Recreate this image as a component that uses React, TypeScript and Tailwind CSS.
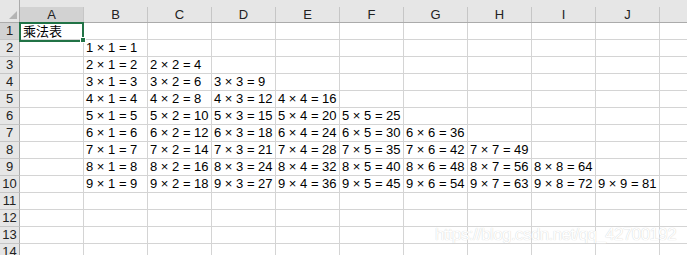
const cols = ["A", "B", "C", "D", "E", "F", "G", "H", "I", "J", "K"];
const rows = Array.from({ length: 14 }, (_, i) => i + 1);

function cellText(row: number, col: number) {
  if (row === 1 && col === 0) return "乘法表";
  const n = row - 1;
  if (row >= 2 && row <= 10 && col >= 1 && col <= n) {
    return `${n} × ${col} = ${n * col}`;
  }
  return "";
}

export default function App() {
  return (
    <div
      className="relative w-[687px] h-[255px] overflow-hidden bg-white text-[13px] text-black"
      style={{ fontFamily: '"Liberation Sans", Arial, "Noto Sans CJK SC", sans-serif' }}
    >
      {/* column headers */}
      <div className="flex h-[23px] bg-[#e6e6e6] border-b border-[#ababab]">
        <div className="relative w-[20px] shrink-0 border-r border-[#ababab]">
          <svg className="absolute left-[9px] top-[11px]" width="8" height="8" viewBox="0 0 8 8">
            <polygon points="8,0 8,8 0,8" fill="#b4b4b4" />
          </svg>
        </div>
        {cols.map((c, i) => (
          <div key={c} className="w-[64px] shrink-0 flex flex-col">
            <div className="h-[7px]" />
            <div
              className={
                "h-[15px] flex items-center justify-center border-r border-[#c6c6c6] leading-[15px] text-[#222] " +
                (i === 0 ? "bg-[#d2d2d2]" : "")
              }
            >
              {c === "K" ? "" : c}
            </div>
          </div>
        ))}
      </div>

      {/* rows */}
      {rows.map((r) => (
        <div key={r} className="flex h-[17px]">
          <div
            className={
              "w-[20px] shrink-0 flex items-center justify-center border-r border-b border-r-[#ababab] border-b-[#c6c6c6] leading-[16px] text-[#222] " +
              (r === 1 ? "bg-[#d2d2d2]" : "bg-[#e6e6e6]")
            }
          >
            {r}
          </div>
          {cols.map((c, i) => {
            const t = cellText(r, i);
            const last = i === r - 1;
            return (
              <div
                key={c}
                className={
                  "w-[64px] shrink-0 border-r border-b border-[#d4d4d4] pl-[2px] leading-[16px] whitespace-nowrap " +
                  (last || i === 0 ? "" : "overflow-hidden")
                }
              >
                {r === 1 && i === 0 ? (
                  <span className="pl-px" style={{ fontFamily: '"Noto Sans CJK SC", sans-serif' }}>
                    {t}
                  </span>
                ) : (
                  t
                )}
              </div>
            );
          })}
        </div>
      ))}

      {/* selected cell A1 */}
      <div className="absolute left-[19px] top-[22px] w-[65px] h-[20px] border-2 border-[#217346]" />
      <div className="absolute left-[80px] top-[37px] w-[6px] h-[6px] bg-[#217346] border border-white" />

      {/* watermark */}
      <div className="absolute left-[435px] top-[226px] text-[17px] leading-[18px] tracking-[-0.6px] text-white [text-shadow:0_0_1px_#c4c4c4]">
        https://blog.csdn.net/qq_42700192
      </div>
    </div>
  );
}
